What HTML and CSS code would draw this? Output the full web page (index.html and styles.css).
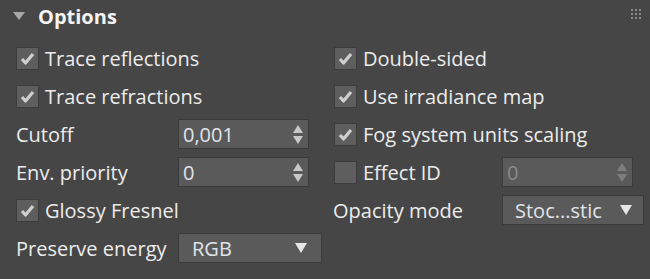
FILE: index.html
```html
<!DOCTYPE html>
<html lang="en">
<head>
  <meta charset="utf-8">
  <title>Options</title>
  <link rel="stylesheet" href="styles.css">
</head>
<body>
  <div class="panel">
    <div class="head">
      <span class="caret"></span>
      <span class="title">Options</span>
      <svg class="grip" width="11" height="11" viewBox="0 0 11 11">
        <rect x="0" y="0" width="2" height="2"/><rect x="4" y="0" width="2" height="2"/><rect x="8" y="0" width="2" height="2"/>
        <rect x="0" y="4" width="2" height="2"/><rect x="4" y="4" width="2" height="2"/><rect x="8" y="4" width="2" height="2"/>
        <rect x="0" y="8" width="2" height="2"/><rect x="4" y="8" width="2" height="2"/><rect x="8" y="8" width="2" height="2"/>
      </svg>
    </div>

    <div class="grid">
      <!-- row 1 -->
      <div class="check on">
        <span class="box"><svg viewBox="0 0 21 21"><path d="M5 11 L8.5 15 L16 6"/></svg></span>Trace reflections
      </div>
      <div class="check on right">
        <span class="box"><svg viewBox="0 0 21 21"><path d="M5 11 L8.5 15 L16 6"/></svg></span>Double-sided
      </div>

      <!-- row 2 -->
      <div class="check on">
        <span class="box"><svg viewBox="0 0 21 21"><path d="M5 11 L8.5 15 L16 6"/></svg></span>Trace refractions
      </div>
      <div class="check on right">
        <span class="box"><svg viewBox="0 0 21 21"><path d="M5 11 L8.5 15 L16 6"/></svg></span>Use irradiance map
      </div>

      <!-- row 3 -->
      <div class="field">
        <span class="label">Cutoff</span>
        <span class="spin"><span class="val">0,001</span><span class="arrows"><i class="up"></i><i class="down"></i></span></span>
      </div>
      <div class="check on right">
        <span class="box"><svg viewBox="0 0 21 21"><path d="M5 11 L8.5 15 L16 6"/></svg></span>Fog system units scaling
      </div>

      <!-- row 4 -->
      <div class="field">
        <span class="label">Env. priority</span>
        <span class="spin"><span class="val">0</span><span class="arrows"><i class="up"></i><i class="down"></i></span></span>
      </div>
      <div class="field right">
        <span class="check">
          <span class="box"></span>Effect ID
        </span>
        <span class="spin off"><span class="val">0</span><span class="arrows"><i class="up"></i><i class="down"></i></span></span>
      </div>

      <!-- row 5 -->
      <div class="check on">
        <span class="box"><svg viewBox="0 0 21 21"><path d="M5 11 L8.5 15 L16 6"/></svg></span>Glossy Fresnel
      </div>
      <div class="field right">
        <span class="label">Opacity mode</span>
        <span class="drop wide"><span class="val">Stoc...stic</span><i class="down"></i></span>
      </div>

      <!-- row 6 -->
      <div class="field">
        <span class="label">Preserve energy</span>
        <span class="drop"><span class="val">RGB</span><i class="down"></i></span>
      </div>
      <div></div>
    </div>
  </div>
</body>
</html>
```

FILE: styles.css
```css
html, body {
  margin: 0;
  background: #464646;
}

body {
  font-family: "Open Sans", "Noto Sans", sans-serif;
  font-size: 20px;
  color: #ececec;
}

.panel {
  width: 650px;
  height: 279px;
  box-sizing: border-box;
  padding: 0 5px 0 16px;
}

.head {
  height: 32px;
  display: flex;
  align-items: center;
  position: relative;
}

.caret {
  width: 0;
  height: 0;
  border-left: 6px solid transparent;
  border-right: 6px solid transparent;
  border-top: 8px solid #a8a8a8;
  margin: 0 13px 0 -3px;
}

.title {
  font-weight: 700;
  font-size: 20px;
  color: #f4f4f4;
}

.grip {
  position: absolute;
  right: 3px;
  top: 9px;
  fill: #8a8a8a;
}

.grid {
  margin-top: 11px;
  display: grid;
  grid-template-columns: 317px 1fr;
  grid-auto-rows: 30px;
  row-gap: 8px;
}

.check {
  display: flex;
  align-items: center;
  white-space: nowrap;
}

.check.right {
  margin-left: 1px;
}

.box {
  width: 21px;
  height: 21px;
  background: #5e5e5e;
  border: 1px solid #3c3c3c;
  margin-right: 6px;
  flex: none;
}

.box svg {
  width: 21px;
  height: 21px;
  display: block;
}

.box path {
  fill: none;
  stroke: #cfcfcf;
  stroke-width: 3.2;
  stroke-linejoin: round;
}

.field {
  display: grid;
  grid-template-columns: 162px auto;
  align-items: center;
}

.field.right {
  grid-template-columns: 169px auto;
}

.field.right .check {
  margin-left: 1px;
}

.spin, .drop {
  height: 30px;
  box-sizing: border-box;
  background: #5a5a5a;
  border: 1px solid #3a3a3a;
  display: flex;
  align-items: center;
  justify-content: space-between;
}

.spin {
  width: 131px;
  padding: 0 5px 0 4px;
}

.drop {
  width: 144px;
  padding: 0 14px 0 13px;
}

.drop.wide {
  width: 142px;
  padding-left: 12px;
  padding-right: 11px;
}

.val {
  color: #e0e4ea;
}

.spin.off .val {
  color: #8a8a8a;
}

.arrows {
  display: flex;
  flex-direction: column;
  gap: 3px;
}

.arrows .up {
  width: 0;
  height: 0;
  border-left: 5.5px solid transparent;
  border-right: 5.5px solid transparent;
  border-bottom: 8px solid #c8c8c8;
}

.arrows .down {
  width: 0;
  height: 0;
  border-left: 5.5px solid transparent;
  border-right: 5.5px solid transparent;
  border-top: 8px solid #c8c8c8;
}

.spin.off .up {
  border-bottom-color: #7e7e7e;
}

.spin.off .down {
  border-top-color: #7e7e7e;
}

.drop .down {
  width: 0;
  height: 0;
  border-left: 6.5px solid transparent;
  border-right: 6.5px solid transparent;
  border-top: 10px solid #e6e6e6;
}
```
